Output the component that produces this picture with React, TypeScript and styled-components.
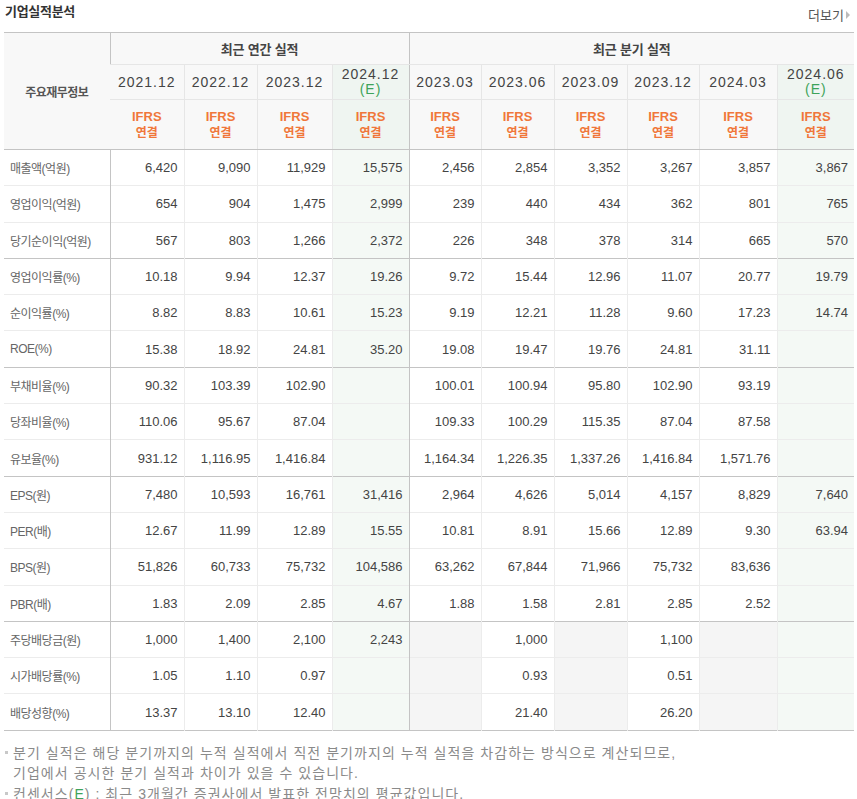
import React from "react";
import styled, { createGlobalStyle } from "styled-components";

const GlobalStyle = createGlobalStyle`
  html, body {
    margin: 0;
    padding: 0;
    background: #fff;
    font-family: "Liberation Sans", "Noto Sans CJK KR", sans-serif;
  }
`;

const Wrap = styled.div`
  width: 850px;
  padding: 0 3px 0 4px;
`;

const TitleBar = styled.div`
  display: flex;
  justify-content: space-between;
  align-items: flex-end;
  height: 32px;
  box-sizing: border-box;
  .title {
    font-size: 13px;
    font-weight: bold;
    color: #333;
    margin: 0 0 12px 1px;
    letter-spacing: -0.3px;
  }
  .more {
    font-size: 13px;
    color: #555;
    margin: 0 4px 8px 0;
    display: flex;
    align-items: center;
    gap: 2px;
    &::after {
      content: "";
      width: 0;
      height: 0;
      border-left: 4px solid #bbb;
      border-top: 4px solid transparent;
      border-bottom: 4px solid transparent;
    }
  }
`;

const Table = styled.table`
  width: 850px;
  border-collapse: collapse;
  table-layout: fixed;
  border-top: 1px solid #c4c4c4;
  border-bottom: 1px solid #c4c4c4;
`;

const HeadCell = styled.th<{ $est?: boolean; $sep?: boolean }>`
  background: ${(p) => (p.$est ? "#eff5f1" : "#f8f8f8")};
  border-bottom: 1px solid #e6e6e6;
  border-left: 1px solid ${(p) => (p.$sep ? "#c4c4c4" : "#e6e6e6")};
  font-weight: normal;
  color: #333;
  padding: 0;
  text-align: center;
  &:first-child {
    border-left: none;
  }
`;

const GroupCell = styled(HeadCell)`
  height: 31px;
  font-weight: bold;
  font-size: 13px;
  color: #444;
  letter-spacing: -0.2px;
`;

const LabelHead = styled(HeadCell)`
  font-weight: bold;
  font-size: 12px;
  color: #555;
  border-bottom: 1px solid #c4c4c4;
  letter-spacing: -0.5px;
`;

const DateCell = styled(HeadCell)`
  height: 34px;
  font-size: 14px;
  letter-spacing: 1px;
  line-height: 15px;
  color: #444;
  .e {
    display: block;
    color: #3ea35a;
    letter-spacing: 1px;
  }
`;

const IfrsCell = styled(HeadCell)`
  height: 49px;
  border-bottom: 1px solid #c4c4c4;
  font-size: 13px;
  font-weight: bold;
  color: #f0773a;
  line-height: 16px;
  span {
    display: block;
  }
  .k {
    font-size: 12px;
  }
`;

const Row = styled.tr<{ $groupStart?: boolean }>`
  td {
    border-top: 1px solid ${(p) => (p.$groupStart ? "#c4c4c4" : "#ececec")};
  }
`;

const Label = styled.td`
  height: 35.3px;
  padding: 0 0 0 6px;
  font-size: 12px;
  color: #666;
  letter-spacing: -0.5px;
  white-space: nowrap;
  border-right: 1px solid #c4c4c4;
`;

const Value = styled.td<{ $est?: boolean; $gray?: boolean; $sep?: boolean }>`
  padding: 0 6px 0 0;
  text-align: right;
  font-size: 13px;
  color: #444;
  background: ${(p) => (p.$est ? "#f4f9f5" : p.$gray ? "#f5f5f5" : "#fff")};
  border-left: 1px solid ${(p) => (p.$sep ? "#c4c4c4" : "#ececec")};
`;

const Notes = styled.ul`
  list-style: none;
  margin: 12px 0 0;
  padding: 0;
  font-size: 14px;
  color: #8a8a8a;
  line-height: 20.5px;
  letter-spacing: 1.05px;
  white-space: nowrap;
  li {
    position: relative;
    padding-left: 9px;
  }
  li::before {
    content: "";
    position: absolute;
    left: 1px;
    top: 8px;
    width: 3px;
    height: 3px;
    background: #c8c8c8;
  }
  .e {
    color: #3ea35a;
  }
`;

const colWidths = [106, 74, 73, 75, 77, 72, 73, 73, 72, 78, 77];

type Period = { date: string; est?: boolean };

const annual: Period[] = [
  { date: "2021.12" },
  { date: "2022.12" },
  { date: "2023.12" },
  { date: "2024.12", est: true },
];

const quarter: Period[] = [
  { date: "2023.03" },
  { date: "2023.06" },
  { date: "2023.09" },
  { date: "2023.12" },
  { date: "2024.03" },
  { date: "2024.06", est: true },
];

const periods = [...annual, ...quarter];

type DataRow = { label: string; values: string[]; groupStart?: boolean; dividend?: boolean };

const rows: DataRow[] = [
  { label: "매출액(억원)", values: ["6,420", "9,090", "11,929", "15,575", "2,456", "2,854", "3,352", "3,267", "3,857", "3,867"] },
  { label: "영업이익(억원)", values: ["654", "904", "1,475", "2,999", "239", "440", "434", "362", "801", "765"] },
  { label: "당기순이익(억원)", values: ["567", "803", "1,266", "2,372", "226", "348", "378", "314", "665", "570"] },
  { label: "영업이익률(%)", groupStart: true, values: ["10.18", "9.94", "12.37", "19.26", "9.72", "15.44", "12.96", "11.07", "20.77", "19.79"] },
  { label: "순이익률(%)", values: ["8.82", "8.83", "10.61", "15.23", "9.19", "12.21", "11.28", "9.60", "17.23", "14.74"] },
  { label: "ROE(%)", values: ["15.38", "18.92", "24.81", "35.20", "19.08", "19.47", "19.76", "24.81", "31.11", ""] },
  { label: "부채비율(%)", groupStart: true, values: ["90.32", "103.39", "102.90", "", "100.01", "100.94", "95.80", "102.90", "93.19", ""] },
  { label: "당좌비율(%)", values: ["110.06", "95.67", "87.04", "", "109.33", "100.29", "115.35", "87.04", "87.58", ""] },
  { label: "유보율(%)", values: ["931.12", "1,116.95", "1,416.84", "", "1,164.34", "1,226.35", "1,337.26", "1,416.84", "1,571.76", ""] },
  { label: "EPS(원)", groupStart: true, values: ["7,480", "10,593", "16,761", "31,416", "2,964", "4,626", "5,014", "4,157", "8,829", "7,640"] },
  { label: "PER(배)", values: ["12.67", "11.99", "12.89", "15.55", "10.81", "8.91", "15.66", "12.89", "9.30", "63.94"] },
  { label: "BPS(원)", values: ["51,826", "60,733", "75,732", "104,586", "63,262", "67,844", "71,966", "75,732", "83,636", ""] },
  { label: "PBR(배)", values: ["1.83", "2.09", "2.85", "4.67", "1.88", "1.58", "2.81", "2.85", "2.52", ""] },
  { label: "주당배당금(원)", groupStart: true, dividend: true, values: ["1,000", "1,400", "2,100", "2,243", "", "1,000", "", "1,100", "", ""] },
  { label: "시가배당률(%)", dividend: true, values: ["1.05", "1.10", "0.97", "", "", "0.93", "", "0.51", "", ""] },
  { label: "배당성향(%)", dividend: true, values: ["13.37", "13.10", "12.40", "", "", "21.40", "", "26.20", "", ""] },
];

// 배당 행에서 회색으로 칠해지는 분기 칸 (2023.03, 2023.09, 2024.03)
const grayQuarter = new Set([4, 6, 8]);

function App() {
  return (
    <Wrap>
      <GlobalStyle />
      <TitleBar>
        <span className="title">기업실적분석</span>
        <span className="more">더보기</span>
      </TitleBar>
      <Table>
        <colgroup>
          {colWidths.map((w, i) => (
            <col key={i} style={{ width: w }} />
          ))}
        </colgroup>
        <thead>
          <tr>
            <LabelHead rowSpan={3}>주요재무정보</LabelHead>
            <GroupCell colSpan={4} $sep>
              최근 연간 실적
            </GroupCell>
            <GroupCell colSpan={6} $sep>
              최근 분기 실적
            </GroupCell>
          </tr>
          <tr>
            {periods.map((p, i) => (
              <DateCell key={i} $est={p.est} $sep={i === 0 || i === 4}>
                {p.date}
                {p.est && <span className="e">(E)</span>}
              </DateCell>
            ))}
          </tr>
          <tr>
            {periods.map((p, i) => (
              <IfrsCell key={i} $est={p.est} $sep={i === 0 || i === 4}>
                <span>IFRS</span>
                <span className="k">연결</span>
              </IfrsCell>
            ))}
          </tr>
        </thead>
        <tbody>
          {rows.map((r, ri) => (
            <Row key={r.label} $groupStart={r.groupStart && ri > 0}>
              <Label>{r.label}</Label>
              {r.values.map((v, i) => (
                <Value
                  key={i}
                  $est={periods[i].est}
                  $gray={r.dividend && grayQuarter.has(i)}
                  $sep={i === 0 || i === 4}
                >
                  {v}
                </Value>
              ))}
            </Row>
          ))}
        </tbody>
      </Table>
      <Notes>
        <li>
          분기 실적은 해당 분기까지의 누적 실적에서 직전 분기까지의 누적 실적을 차감하는 방식으로 계산되므로,
          <br />
          기업에서 공시한 분기 실적과 차이가 있을 수 있습니다.
        </li>
        <li>
          컨센서스(<span className="e">E</span>) : 최근 3개월간 증권사에서 발표한 전망치의 평균값입니다.
        </li>
      </Notes>
    </Wrap>
  );
}

export default App;
